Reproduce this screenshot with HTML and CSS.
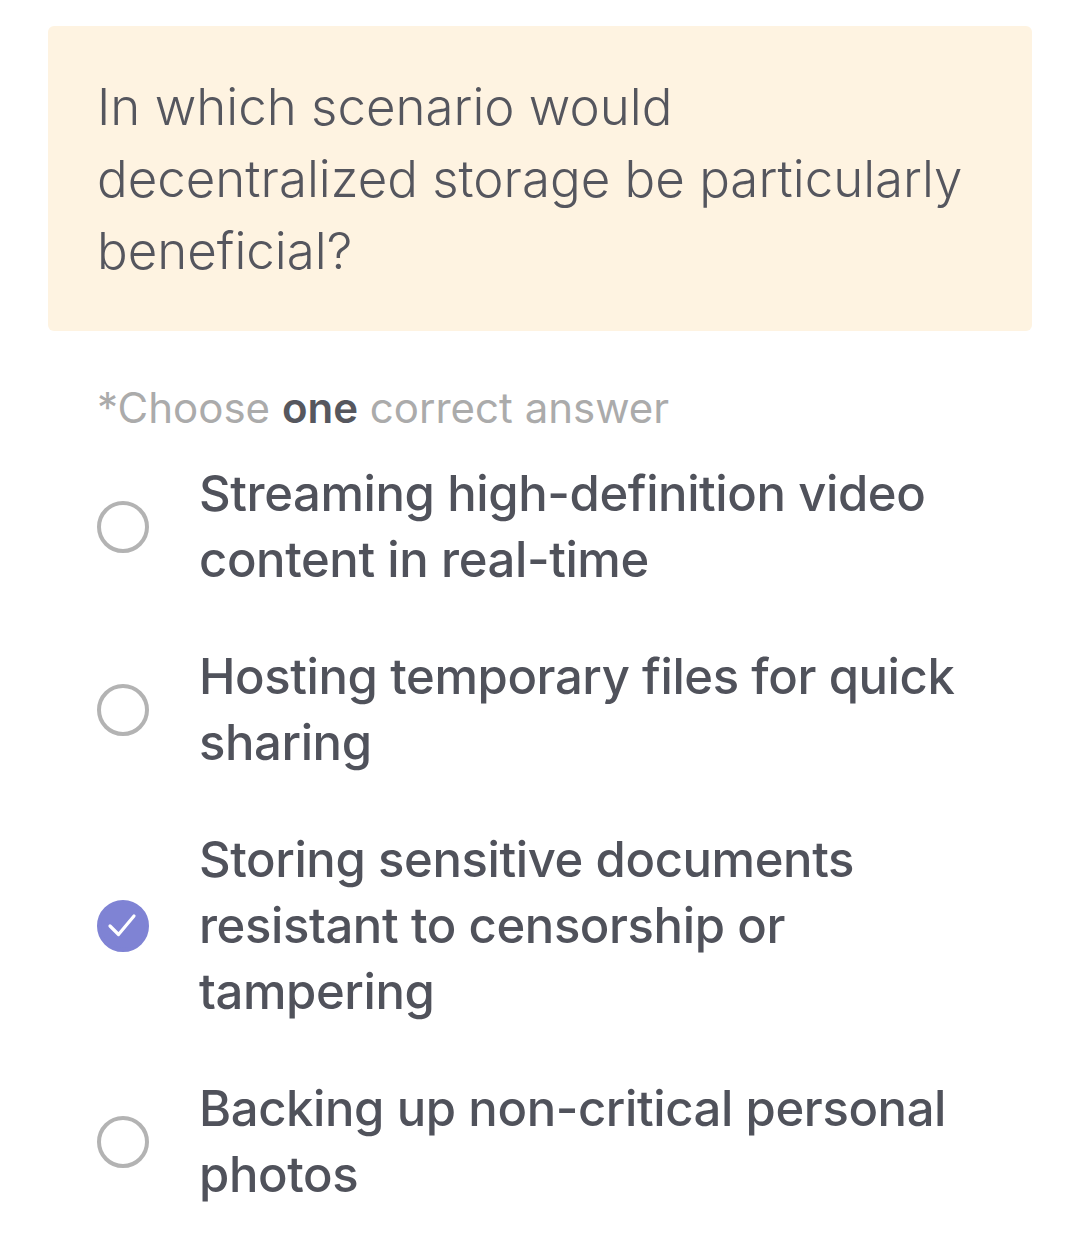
FILE: index.html
```html
<!DOCTYPE html>
<html lang="en">
<head>
<meta charset="utf-8">
<link rel="stylesheet" href="styles.css">
</head>
<body>
<div class="page">
  <div class="question">
    <p class="question-text">In which scenario would decentralized storage be particularly beneficial?</p>
  </div>
  <p class="hint">*Choose <b>one</b> correct answer</p>
  <ul class="options">
    <li class="option">
      <span class="radio"></span>
      <span class="label">Streaming high-definition video content in real-time</span>
    </li>
    <li class="option">
      <span class="radio"></span>
      <span class="label">Hosting temporary files for quick sharing</span>
    </li>
    <li class="option">
      <span class="radio checked">
        <svg viewBox="0 0 44 44" width="44" height="44"><path d="M9 22l8.5 8.5L33 12" fill="none" stroke="#fff" stroke-width="3.2" stroke-linecap="round" stroke-linejoin="round"/></svg>
      </span>
      <span class="label">Storing sensitive documents resistant to censorship or tampering</span>
    </li>
    <li class="option">
      <span class="radio"></span>
      <span class="label">Backing up non-critical personal photos</span>
    </li>
  </ul>
</div>
</body>
</html>
```

FILE: styles.css
```css
html, body {
  margin: 0;
  padding: 0;
  background: #ffffff;
}
body {
  font-family: Inter, "Noto Sans", sans-serif;
  color: #50525b;
}
.page {
  padding: 26px 48px 0 48px;
}
.question {
  background: #fef3e1;
  border-radius: 6px;
  padding: 45px 60px 44px 49px;
}
.question-text {
  margin: 0;
  font-size: 51px;
  font-weight: 300;
  line-height: 72px;
  color: #55565e;
}
.hint {
  margin: 52px 0 0 49px;
  font-size: 42px;
  line-height: 50px;
  color: #ababab;
}
.hint b {
  font-weight: 600;
  color: #56575e;
}
.options {
  list-style: none;
  margin: 28px 0 0 0;
  padding: 0;
  display: flex;
  flex-direction: column;
  gap: 51px;
}
.option {
  display: flex;
  align-items: center;
  padding-left: 49px;
}
.radio {
  flex: none;
  width: 44px;
  height: 44px;
  border: 4px solid #b3b3b3;
  border-radius: 50%;
  margin-right: 50px;
  display: flex;
  align-items: center;
  justify-content: center;
}
.radio.checked {
  background: #7f83d4;
  border-color: #7f83d4;
}
.label {
  max-width: 790px;
  font-size: 49px;
  font-weight: 500;
  line-height: 66px;
  letter-spacing: -0.4px;
  color: #50525b;
}
```
